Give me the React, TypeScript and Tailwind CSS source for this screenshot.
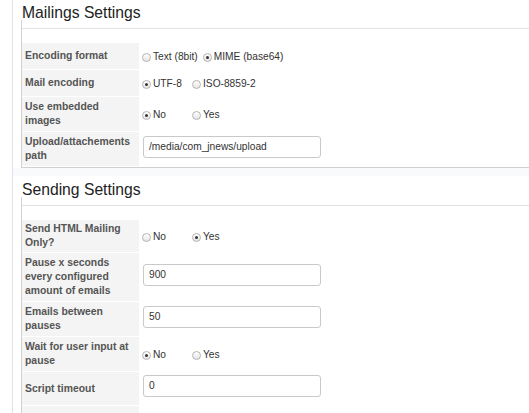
import React from 'react';

type Opt = { label: string; checked?: boolean };

type Row =
  | { kind: 'radio'; label: string[]; options: Opt[]; tight?: boolean }
  | { kind: 'input'; label: string[]; value: string; tight?: boolean };

const mailings: Row[] = [
  { kind: 'radio', label: ['Encoding format'], options: [{ label: 'Text (8bit)' }, { label: 'MIME (base64)', checked: true }] },
  { kind: 'radio', label: ['Mail encoding'], options: [{ label: 'UTF-8', checked: true }, { label: 'ISO-8859-2' }] },
  { kind: 'radio', label: ['Use embedded images'], options: [{ label: 'No', checked: true }, { label: 'Yes' }] },
  { kind: 'input', label: ['Upload/attachements path'], value: '/media/com_jnews/upload' },
];

const sending: Row[] = [
  { kind: 'radio', label: ['Send HTML Mailing Only?'], options: [{ label: 'No' }, { label: 'Yes', checked: true }], tight: true },
  { kind: 'input', label: ['Pause x seconds every configured amount of emails'], value: '900' },
  { kind: 'input', label: ['Emails between pauses'], value: '50' },
  { kind: 'radio', label: ['Wait for user input at pause'], options: [{ label: 'No', checked: true }, { label: 'Yes' }] },
  { kind: 'input', label: ['Script timeout'], value: '0' },
];

function Radio({ checked }: { checked?: boolean }) {
  return (
    <span className="inline-flex h-[9px] w-[9px] shrink-0 items-center justify-center rounded-full border border-[#b3b3b3] bg-gradient-to-b from-white to-[#e6e6e6]">
      {checked ? <span className="h-[3px] w-[3px] rounded-full bg-[#333]" /> : null}
    </span>
  );
}

function SettingsRow({ row }: { row: Row }) {
  return (
    <div className="flex">
      <div
        className={`w-[117px] shrink-0 border-b border-white bg-[#f4f4f4] pl-[3px] pr-[6px] flex items-center text-[10.4px] font-bold leading-[14px] text-[#555] ${
          row.tight ? 'py-[2px]' : 'py-[3px]'
        }`}
      >
        <span>{row.label.join(' ')}</span>
      </div>
      <div className="flex flex-1 items-center border-b border-white pl-[3px] py-[3px]">
        {row.kind === 'radio' ? (
          <div className="flex h-[20px] items-center text-[10.2px] leading-[13px] text-[#333]">
            {row.options.map((o) => (
              <span key={o.label} className="mr-[5px] inline-flex min-w-[45px] items-center">
                <span className="mt-[3px] flex">
                  <Radio checked={o.checked} />
                </span>
                <span className="ml-[2px]">{o.label}</span>
              </span>
            ))}
          </div>
        ) : (
          <div className="ml-[1px] mb-[5px] flex h-[22px] w-[178px] items-center rounded-[3px] border border-[#c9c9c9] bg-white pl-[5px] text-[10.2px] text-[#333]">
            {row.value}
          </div>
        )}
      </div>
    </div>
  );
}

function Section({ title, rows, top, last }: { title: string; rows: Row[]; top: number; last?: boolean }) {
  return (
    <div>
      <h3 className={`${top === 6 ? 'pt-[6px]' : 'pt-[7px]'} pl-[1px] text-[15.7px] font-normal leading-[14px] text-[#222]`}>{title}</h3>
      <div className={`border-l border-[#d2d2d2] ${last ? '' : 'border-b border-b-[#d0d0d0]'}`}>
        <div className="h-[8px]" />
        <div className="border-t border-[#e2e2e2] pt-[14px]">
          {rows.map((r) => (
            <SettingsRow key={r.label.join(' ')} row={r} />
          ))}
          {last ? (
            <div className="flex h-[30px]">
              <div className="w-[117px] bg-[#f4f4f4]" />
            </div>
          ) : null}
        </div>
      </div>
    </div>
  );
}

export default function App() {
  return (
    <div className="h-[413px] w-[529px] overflow-hidden bg-white font-['Liberation_Sans',Arial,sans-serif]">
      <div className="ml-[12px] h-full border-l border-[#dfe4ec] pl-[8px]">
        <Section title="Mailings Settings" rows={mailings} top={6} />
        <div className="-ml-[8px] h-[8px] bg-[#f9fafc]" />
        <Section title="Sending Settings" rows={sending} top={7} last />
      </div>
    </div>
  );
}
